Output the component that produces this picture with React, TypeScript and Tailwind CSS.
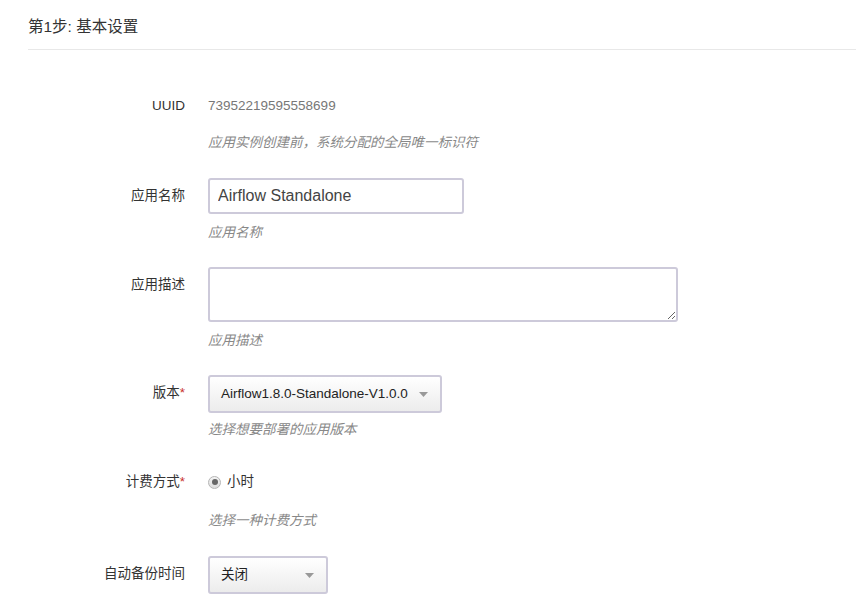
import React from 'react';

const font = "font-['Liberation_Sans','Noto_Sans_CJK_SC',sans-serif]";

function Label({ text, required }: { text: string; required?: boolean }) {
  return (
    <div className="w-[157px] h-[36px] shrink-0 flex items-center justify-end text-[13.5px] text-[#333]">
      {text}
      {required && <span className="text-[#c9302c]">*</span>}
    </div>
  );
}

function Help({ text, mt }: { text: string; mt: string }) {
  return <p className={`${mt} leading-[20px] text-[13.5px] italic text-[#888]`}>{text}</p>;
}

function Caret() {
  return (
    <svg width="9" height="5" viewBox="0 0 9 5" className="shrink-0">
      <path d="M0 0h9L4.5 5z" fill="#999" />
    </svg>
  );
}

function SelectBox({ value, width }: { value: string; width: string }) {
  return (
    <div
      className={`${width} h-[38px] flex items-center justify-between pl-[11px] pr-[12px] rounded-[3px] border-2 border-[#cdcada] bg-gradient-to-b from-white to-[#ececec] text-[13.5px] text-[#222]`}
    >
      <span>{value}</span>
      <Caret />
    </div>
  );
}

export default function App() {
  return (
    <main className={`${font} bg-white min-h-screen pl-[28px]`}>
      <header className="pt-[17px] pb-[12px] border-b border-[#e8e8e8]">
        <h1 className="leading-[20px] text-[15.5px] text-[#333]">第1步: 基本设置</h1>
      </header>

      <section className="pt-[36px]">
        <div className="flex gap-[23px] mt-[2px]">
          <Label text="UUID" />
          <div>
            <div className="h-[36px] flex items-center text-[13.5px] text-[#777]">73952219595558699</div>
            <Help text="应用实例创建前，系统分配的全局唯一标识符" mt="mt-[9px]" />
          </div>
        </div>

        <div className="flex gap-[23px] mt-[25px]">
          <Label text="应用名称" />
          <div>
            <input
              defaultValue="Airflow Standalone"
              className="w-[256px] h-[36px] px-[8px] rounded-[3px] border-2 border-[#cdcada] text-[16px] text-[#444] outline-none"
            />
            <Help text="应用名称" mt="mt-[9px]" />
          </div>
        </div>

        <div className="flex gap-[23px] mt-[24px]">
          <Label text="应用描述" />
          <div>
            <textarea className="block w-[470px] h-[55px] rounded-[3px] border-2 border-[#cdcada] outline-none" />
            <Help text="应用描述" mt="mt-[9px]" />
          </div>
        </div>

        <div className="flex gap-[23px] mt-[24px]">
          <Label text="版本" required />
          <div>
            <SelectBox value="Airflow1.8.0-Standalone-V1.0.0" width="w-[234px]" />
            <Help text="选择想要部署的应用版本" mt="mt-[7px]" />
          </div>
        </div>

        <div className="flex gap-[23px] mt-[24px]">
          <Label text="计费方式" required />
          <div>
            <div className="h-[36px] flex items-center gap-[6px] text-[13.5px] text-[#333]">
              <span className="w-[13px] h-[13px] rounded-full border border-[#b5b5b5] bg-gradient-to-b from-[#f4f4f4] to-[#dcdcdc] flex items-center justify-center">
                <span className="w-[6px] h-[6px] rounded-full bg-[#666]" />
              </span>
              小时
            </div>
            <Help text="选择一种计费方式" mt="mt-[11px]" />
          </div>
        </div>

        <div className="flex gap-[23px] mt-[25px]">
          <Label text="自动备份时间" />
          <SelectBox value="关闭" width="w-[120px]" />
        </div>
      </section>
    </main>
  );
}
